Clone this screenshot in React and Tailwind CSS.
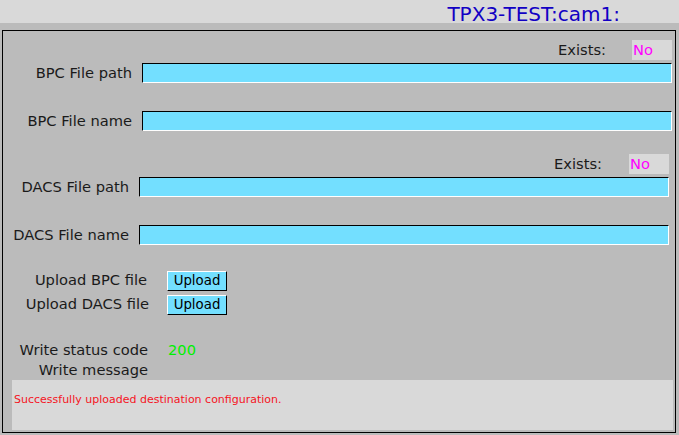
import React from "react";

const font = { fontFamily: '"DejaVu Sans", sans-serif' };

function Field({ label, labelW, ml, mr }) {
  return (
    <div className="flex items-center h-[20px]">
      <div className={`${labelW} shrink-0 text-right text-[14.67px] text-[#1a1a1a] leading-none whitespace-nowrap`}>{label}</div>
      <div className={`flex-1 h-[20px] bg-[#73dfff] border-t border-l border-black border-b border-r border-b-white border-r-white ${ml} ${mr}`} />
    </div>
  );
}

function Exists({ mr, gap }) {
  return (
    <div className={`flex items-center justify-end h-[20px] ${mr}`}>
      <span className={`text-[14.67px] text-[#1a1a1a] leading-none ${gap}`}>Exists:</span>
      <div className="w-[40px] h-[20px] bg-[#d9d9d9] text-[#ff00ff] text-[14.67px] leading-[20px] pl-[1px]">No</div>
    </div>
  );
}

function UploadRow({ label, labelW, ml }) {
  return (
    <div className="flex items-center h-[21px]">
      <div className={`${labelW} shrink-0 text-right text-[14.67px] text-[#1a1a1a] leading-none whitespace-nowrap`}>{label}</div>
      <button className={`${ml} w-[60px] h-[20px] bg-[#73dfff] border border-t-white border-l-white border-b-black border-r-black text-[13.33px] text-black leading-none`}>
        Upload
      </button>
    </div>
  );
}

export default function App() {
  return (
    <div className="w-[679px] h-[435px] bg-[#bbbbbb] flex flex-col overflow-hidden" style={font}>
      <div className="h-[23px] bg-[#d9d9d9] flex items-center justify-end pr-[59px]">
        <span className="text-[20px] text-[#1200c4] leading-none mt-[4px]">TPX3-TEST:cam1:</span>
      </div>
      <div className="ml-[2px] mr-[3px] mt-[7px] h-[403px] border border-black flex flex-col">
        <div className="mt-[9px]">
          <Exists mr="mr-[3px]" gap="mr-[26px]" />
        </div>
        <div className="mt-[3px]">
          <Field label="BPC File path" labelW="w-[129px]" ml="ml-[10px]" mr="mr-[3px]" />
        </div>
        <div className="mt-[28px]">
          <Field label="BPC File name" labelW="w-[129px]" ml="ml-[10px]" mr="mr-[3px]" />
        </div>
        <div className="mt-[23px]">
          <Exists mr="mr-[6px]" gap="mr-[27px]" />
        </div>
        <div className="mt-[3px]">
          <Field label="DACS File path" labelW="w-[126px]" ml="ml-[10px]" mr="mr-[6px]" />
        </div>
        <div className="mt-[28px]">
          <Field label="DACS File name" labelW="w-[126px]" ml="ml-[10px]" mr="mr-[6px]" />
        </div>
        <div className="mt-[25px] flex flex-col gap-[3px]">
          <UploadRow label="Upload BPC file" labelW="w-[144px]" ml="ml-[20px]" />
          <UploadRow label="Upload DACS file" labelW="w-[146px]" ml="ml-[18px]" />
        </div>
        <div className="mt-[25px] flex items-center h-[20px]">
          <div className="w-[145px] shrink-0 text-right text-[14.67px] text-[#1a1a1a] leading-none whitespace-nowrap">Write status code</div>
          <div className="ml-[20px] text-[14.67px] text-[#00f000] leading-none">200</div>
        </div>
        <div className="flex items-center h-[20px]">
          <div className="w-[145px] shrink-0 text-right text-[14.67px] text-[#1a1a1a] leading-none whitespace-nowrap">Write message</div>
        </div>
        <div className="ml-[9px] mr-[2px] h-[50px] bg-[#d9d9d9] flex items-center">
          <span className="text-[11px] text-[#f5141e] leading-none pl-[2px] -mt-[11px]">Successfully uploaded destination configuration.</span>
        </div>
      </div>
    </div>
  );
}
